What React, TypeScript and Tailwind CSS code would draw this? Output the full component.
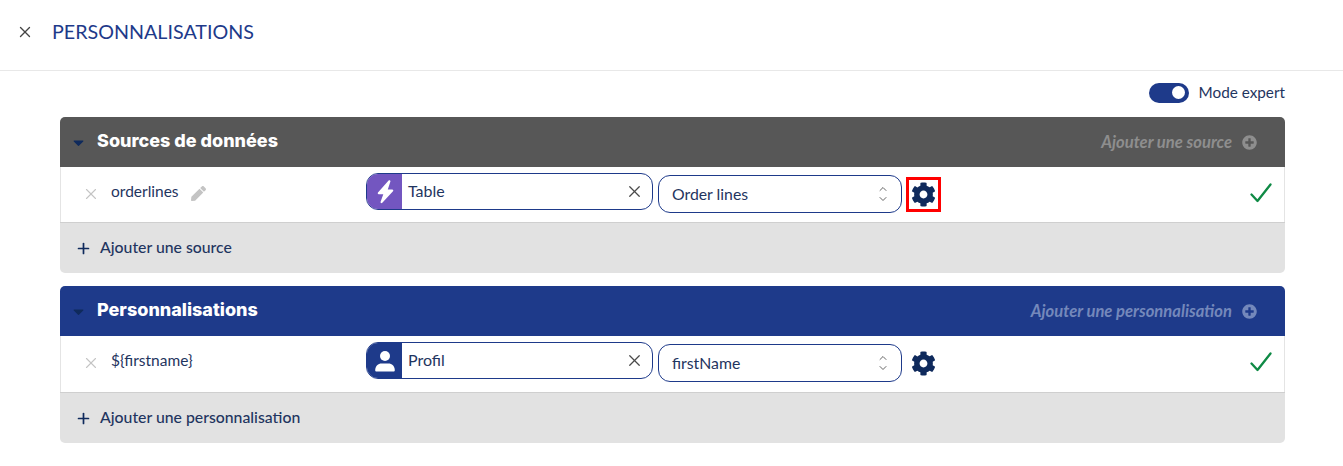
import React from "react";
import { FaCog, FaPen, FaPlusCircle, FaCaretDown } from "react-icons/fa";
import { X, Plus, ChevronUp, ChevronDown } from "lucide-react";

const body = "[font-family:Lato,'Noto_Sans',sans-serif]";

function Bolt() {
  return (
    <svg width="24" height="26" viewBox="0 0 24 26" fill="white">
      <path d="M15.6 1.6 5 13.6c-.6.7-.2 1.600.7 1.600h4.600l-2.700 7.600c-.4 1.100.9 1.900 1.700 1L20 12.200c.6-.7.2-1.700-.8-1.700h-4.400l2.600-7.900c.4-1.100-1-1.900-1.800-1z" />
    </svg>
  );
}

function Person() {
  return (
    <svg width="20" height="22" viewBox="0 0 20 22" fill="white">
      <circle cx="10" cy="6" r="5" />
      <path d="M1.500 21.500c-.8 0-1.300-.5-1.300-1.300 0-4 3-6.700 6.300-6.700h7c3.300 0 6.300 2.700 6.300 6.700 0 .8-.5 1.300-1.300 1.300z" />
    </svg>
  );
}

function CheckMark() {
  return (
    <svg width="22" height="20" viewBox="0 0 22 20" fill="none" stroke="#0f8a45" strokeWidth="2.3" strokeLinecap="round" strokeLinejoin="round">
      <path d="M1.500 11.500 7.500 18 20.500 1.500" />
    </svg>
  );
}

function Row({ name, edit, pillIcon, pillBg, pill, select, highlighted, rowH }: { name: string; edit?: boolean; pillIcon: React.ReactNode; pillBg: string; pill: string; select: string; highlighted?: boolean; rowH: string }) {
  return (
    <div className={`flex items-start border-x border-[#e4e4e4] bg-white ${rowH}`}>
      <div className="flex w-[305px] items-center pl-[21px] pt-[14px]">
        <X size={18} strokeWidth={1.5} className="mt-[3px] text-[#c4c4c4]" />
        <span className="ml-[11px] -translate-y-[1px] text-[15.5px] leading-[22px] text-[#1f3560]">{name}</span>
        {edit && <FaPen size={15} className="ml-[12px] mt-[3px] text-[#c4c4c4]" />}
      </div>
      <div className="mt-[6px] flex h-[37px] w-[287px] items-center overflow-hidden rounded-[12px] border border-[#1e3a8a]">
        <div className={`flex h-full w-[35px] items-center justify-center text-white ${pillBg}`}>{pillIcon}</div>
        <span className="ml-[6px] flex-1 -translate-y-[1px] text-[16px] text-[#1f3560]">{pill}</span>
        <X size={19} strokeWidth={1.6} className="mr-[8px] text-[#4a4a4a]" />
      </div>
      <div className="ml-[5px] mt-[8px] flex h-[38px] w-[244px] items-center rounded-[12px] border border-[#1e3a8a] pl-[13px] pr-[12px]">
        <span className="flex-1 text-[15.8px] text-[#1f3560]">{select}</span>
        <div className="flex flex-col text-[#666]">
          <ChevronUp size={12} className="-mb-[1px]" />
          <ChevronDown size={12} className="-mt-[1px]" />
        </div>
      </div>
      <div className={`ml-[4px] mt-[10px] flex h-[35px] w-[35px] items-center justify-center pr-[1px] ${highlighted ? "border-[3px] border-[#ff0000]" : ""}`}>
        <FaCog size={25} className="text-[#0f2a5c]" />
      </div>
      <div className="ml-auto mr-[12px] mt-[16px]">
        <CheckMark />
      </div>
    </div>
  );
}

function Section({ title, action, bg, footer, children, actionColor, rowH }: { title: string; action: string; bg: string; footer: string; children: React.ReactNode; actionColor: string; rowH?: string }) {
  return (
    <div className="overflow-hidden rounded-[5px]">
      <div className={`flex h-[50px] items-center pl-[10px] pr-[28px] ${bg}`}>
        <FaCaretDown size={17} className="text-[#0f2a5c]" />
        <span className="ml-[10px] -translate-y-[2px] [font-family:Inter,sans-serif] text-[18px] font-extrabold text-white">{title}</span>
        <span className={`ml-auto text-[16.6px] font-bold italic ${actionColor}`}>{action}</span>
        <FaPlusCircle size={15} className={`ml-[10px] ${actionColor}`} />
      </div>
      {children}
      <div className="flex h-[51px] items-center border-t border-[#cfcfcf] bg-[#e2e2e2] pl-[15px]">
        <Plus size={17} strokeWidth={2.4} className="text-[#0f2a5c]" />
        <span className="ml-[8px] -translate-y-[1px] text-[15.8px] font-medium text-[#1f3560]">{footer}</span>
      </div>
    </div>
  );
}

export default function App() {
  return (
    <div className={`h-[466px] w-[1343px] overflow-hidden bg-white ${body}`}>
      <header className="flex h-[71px] items-center border-b border-[#e8e8e8] pl-[16px] pb-[6px]">
        <X size={18} strokeWidth={1.8} className="text-[#444]" />
        <h1 className="ml-[18px] text-[19.7px] text-[#1e3a8a]">PERSONNALISATIONS</h1>
      </header>
      <div className="flex h-[45px] items-center justify-end pb-[2px] pr-[58px]">
        <div className="flex h-[20px] w-[40px] items-center justify-end rounded-full bg-[#1e3a8a] pr-[4px]">
          <div className="h-[13px] w-[13px] rounded-full bg-white" />
        </div>
        <span className="ml-[10px] text-[15.3px] text-[#1f3560]">Mode expert</span>
      </div>
      <div className="mx-[60px] mt-[1px] flex w-[1225px] flex-col gap-[13px]">
        <Section title="Sources de données" action="Ajouter une source" bg="bg-[#575757]" actionColor="text-[#8e8e8e]" footer="Ajouter une source">
          <Row rowH="h-[55px]" name="orderlines" edit pillIcon={<Bolt />} pillBg="bg-[#7356c0]" pill="Table" select="Order lines" highlighted />
        </Section>
        <Section title="Personnalisations" action="Ajouter une personnalisation" bg="bg-[#1e3a8a]" actionColor="text-[#7488bb]" footer="Ajouter une personnalisation">
          <Row rowH="h-[56px]" name="${firstname}" pillIcon={<Person />} pillBg="bg-[#1e3a8a]" pill="Profil" select="firstName" />
        </Section>
      </div>
    </div>
  );
}
